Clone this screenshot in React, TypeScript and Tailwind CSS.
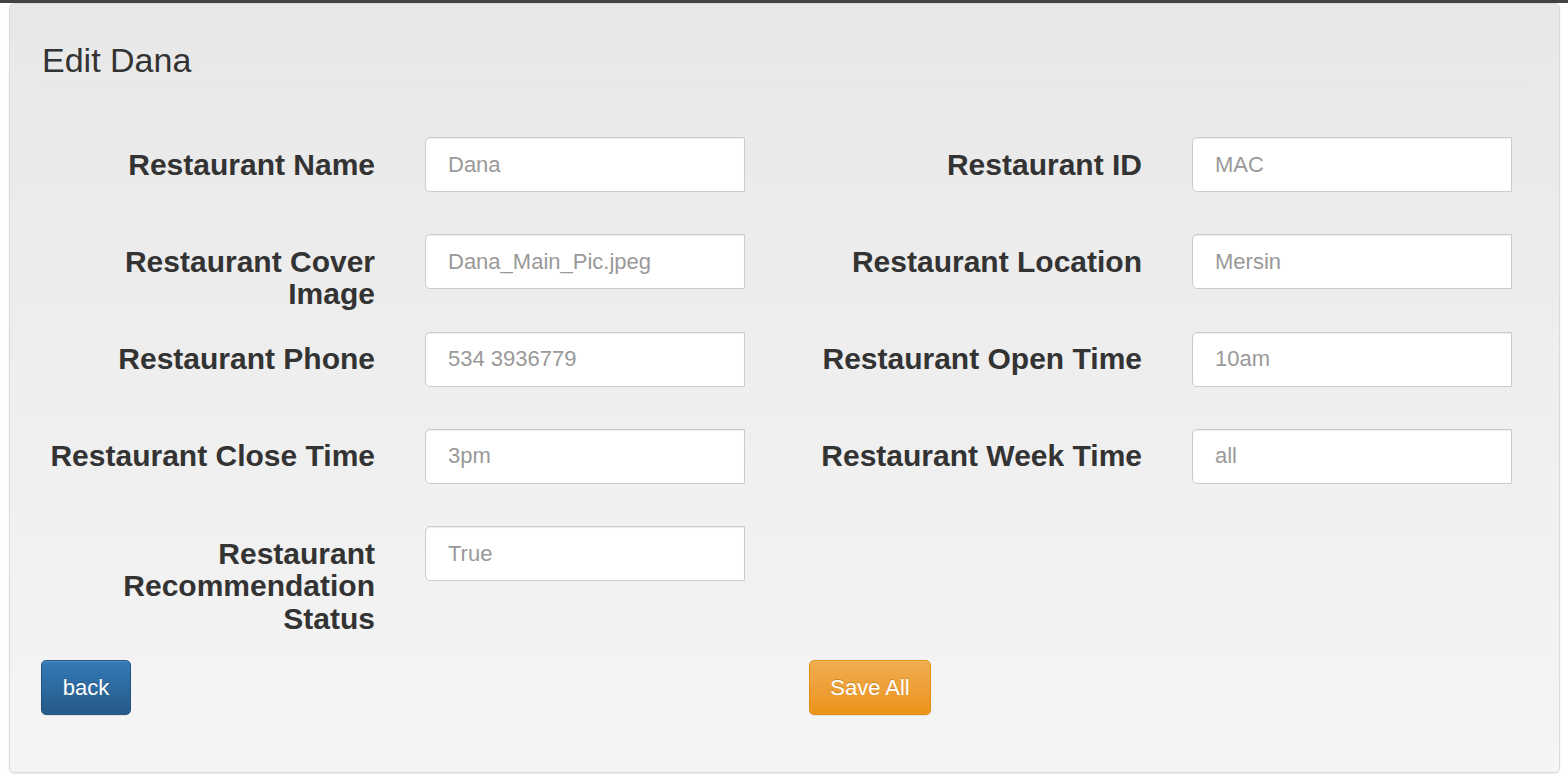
import React from 'react';

type Field = { label: string; value: string };

const leftFields: Field[] = [
  { label: 'Restaurant Name', value: 'Dana' },
  { label: 'Restaurant Cover Image', value: 'Dana_Main_Pic.jpeg' },
  { label: 'Restaurant Phone', value: '534 3936779' },
  { label: 'Restaurant Close Time', value: '3pm' },
  { label: 'Restaurant Recommendation Status', value: 'True' },
];

const rightFields: Field[] = [
  { label: 'Restaurant ID', value: 'MAC' },
  { label: 'Restaurant Location', value: 'Mersin' },
  { label: 'Restaurant Open Time', value: '10am' },
  { label: 'Restaurant Week Time', value: 'all' },
];

const FormRow: React.FC<{ field: Field }> = ({ field }) => (
  <div className="flex h-[55px] items-start">
    <label className="w-[333px] shrink-0 pt-[11.5px] text-right text-[30px] font-bold leading-[32.5px] text-[#333]">
      {field.label}
    </label>
    <input
      type="text"
      placeholder={field.value}
      className="ml-[50px] h-[55px] w-[320px] rounded-l-[5px] border border-[#ccc] bg-white pl-[22px] text-[22px] text-[#555] shadow-[inset_0_1px_1px_rgba(0,0,0,0.075)] outline-none placeholder:text-[#999]"
    />
  </div>
);

const App: React.FC = () => {
  return (
    <div className="min-h-screen bg-white font-['Liberation_Sans',Arial,sans-serif]">
      <div className="h-[3px] bg-[#434343]" />
      <div className="ml-[9px] mr-[8px] h-[770px] rounded-[5px] border border-[#dadada] bg-gradient-to-b from-[#e8e8e8] to-[#f5f5f5] shadow-[0_1px_2px_rgba(0,0,0,0.08)]">
        <div className="mx-[32px] border-b border-black/[0.015] pt-[38px] pb-[8px]">
          <h3 className="text-[34px] leading-[36px] font-normal text-[#333]">Edit Dana</h3>
        </div>

        <div className="pl-[32px] pt-[50px]">
          <div className="grid grid-cols-[767px_1fr]">
            <div className="flex flex-col gap-[42.25px]">
              {leftFields.map((f) => (
                <FormRow key={f.label} field={f} />
              ))}
            </div>
            <div className="flex flex-col gap-[42.25px]">
              {rightFields.map((f) => (
                <FormRow key={f.label} field={f} />
              ))}
            </div>
          </div>

          <div className="mt-[79px] grid grid-cols-[767px_1fr] pb-[26px]">
            <div>
              <button className="-ml-px h-[55px] w-[90px] rounded-[5px] border border-[#245580] bg-gradient-to-b from-[#337ab7] to-[#265a88] text-[22px] text-white shadow-[inset_0_1px_0_rgba(255,255,255,0.15),0_1px_1px_rgba(0,0,0,0.075)] [text-shadow:0_-1px_0_rgba(0,0,0,0.2)]">
                back
              </button>
            </div>
            <div>
              <button className="h-[55px] w-[122px] rounded-[5px] border border-[#e38d13] bg-gradient-to-b from-[#f0ad4e] to-[#eb9316] text-[22px] text-white shadow-[inset_0_1px_0_rgba(255,255,255,0.15),0_1px_1px_rgba(0,0,0,0.075)] [text-shadow:0_-1px_0_rgba(0,0,0,0.2)]">
                Save All
              </button>
            </div>
          </div>
        </div>
        <div className="border-t border-black/[0.012]" />
      </div>
    </div>
  );
};

export default App;
